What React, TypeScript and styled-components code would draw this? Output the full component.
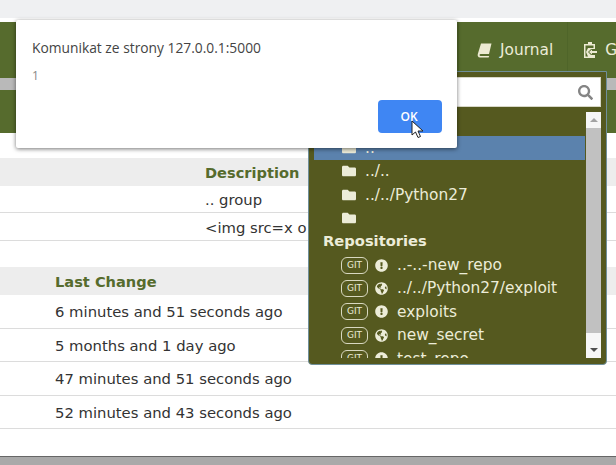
import styled, { createGlobalStyle } from 'styled-components';
import { FaExclamationCircle, FaFolder, FaGlobeAmericas, FaSearch } from 'react-icons/fa';

const GlobalStyle = createGlobalStyle`
  html, body {
    margin: 0;
    padding: 0;
    background: #fff;
    overflow: hidden;
  }
`;

const Page = styled.div`
  position: relative;
  display: flex;
  flex-direction: column;
  width: 616px;
  height: 465px;
  overflow: hidden;
  font-family: 'DejaVu Sans', Verdana, sans-serif;
  font-size: 14.8px;
  color: #333;
`;
const TopStrip = styled.div`
  height: 18px;
  margin-bottom: 4px;
  background: #eff0f2;
`;
const NavBar = styled.nav`
  display: flex;
  justify-content: flex-start;
  height: 56px;
  padding-left: 458px;
  box-sizing: border-box;
  background: #566b2d;
`;
const NavItem = styled.div<{ $left: number }>`
  display: flex;
  flex: none;
  align-items: center;
  gap: 8px;
  padding: 0 14px 0 ${({ $left }) => $left}px;
  border-left: 1px solid #4f6529;
  color: #ececd8;
  font-size: 15.4px;
`;
const GreyBand = styled.div`
  height: 12px;
  background: #b9b9b9;
`;
const SubBar = styled.div`
  height: 43px;
  background: #566b2d;
`;
const Main = styled.main`
  display: flex;
  flex: 1;
  flex-direction: column;
  padding-top: 25px;
`;
const Table = styled.div<{ $gap: number }>`
  margin-bottom: ${({ $gap }) => $gap}px;
`;
const HeadRow = styled.div<{ $indent: number }>`
  display: flex;
  align-items: center;
  box-sizing: border-box;
  height: 28px;
  padding: 1px 0 0 ${({ $indent }) => $indent}px;
  background: #ededed;
  color: #566b2d;
  font-size: 14.6px;
  font-weight: bold;
`;
const Row = styled.div<{ $indent: number; $height: number }>`
  display: flex;
  align-items: center;
  box-sizing: border-box;
  height: ${({ $height }) => $height}px;
  padding: 1px 0 0 ${({ $indent }) => $indent}px;
  border-bottom: 1px solid #dcdcdc;
  white-space: nowrap;
`;
const Footer = styled.footer`
  height: 9px;
  border-top: 1px solid #666;
  box-sizing: border-box;
  background: #a9a9a9;
`;

const Dropdown = styled.div`
  position: absolute;
  top: 71px;
  left: 308px;
  display: flex;
  flex-direction: column;
  gap: 5px;
  box-sizing: border-box;
  width: 299px;
  height: 294px;
  padding: 5px 5px 6px;
  border: 1px solid #6f8f9a;
  border-radius: 0 0 4px 4px;
  background: #55591f;
`;
const SearchBox = styled.div`
  display: flex;
  flex: none;
  align-items: center;
  justify-content: flex-end;
  height: 30px;
  padding-right: 7px;
  box-sizing: border-box;
  border: 1px solid #d8d8c8;
  background: #fff;
  color: #858585;
  font-size: 15px;
`;
const ListArea = styled.div`
  display: flex;
  flex: 1;
  min-height: 0;
  gap: 1px;
`;
const List = styled.div`
  flex: 1;
  padding-top: 1px;
  overflow: hidden;
  color: #ececd8;
  font-size: 15.4px;
`;
const GroupLabel = styled.div`
  display: flex;
  align-items: center;
  box-sizing: border-box;
  height: 23.4px;
  padding: 0 0 2px 9px;
  font-size: 14.7px;
  font-weight: bold;
`;
const Item = styled.div<{ $selected?: boolean }>`
  display: flex;
  align-items: center;
  gap: 9px;
  height: 23.4px;
  padding-left: 28px;
  white-space: nowrap;
  background: ${({ $selected }) => ($selected ? '#5b82ad' : 'transparent')};

  svg {
    flex: none;
    font-size: 14px;
  }
`;
const GitBadge = styled.span`
  flex: none;
  box-sizing: border-box;
  width: 27px;
  height: 17px;
  margin: 0 -2px 0 -1px;
  border: 1px solid #d8d8c0;
  border-radius: 6px;
  font-size: 9px;
  line-height: 15px;
  text-align: center;
`;
const RepoIcon = styled.span`
  display: flex;
  flex: none;

  && svg {
    font-size: 13px;
  }
`;
const ScrollTrack = styled.div`
  display: flex;
  flex: none;
  flex-direction: column;
  width: 15px;
  background: #f6f6f6;
`;
const ScrollArrow = styled.div<{ $up?: boolean }>`
  display: flex;
  flex: none;
  align-items: center;
  justify-content: center;
  height: 16px;

  &::after {
    content: '';
    border-left: 4px solid transparent;
    border-right: 4px solid transparent;
    ${({ $up }) => ($up ? 'border-bottom: 4px solid #a3a3a3;' : 'border-top: 4px solid #505050;')}
  }
`;
const ScrollThumb = styled.div`
  flex: none;
  height: 205px;
  background: #c1c1c1;
`;
const ScrollSpace = styled.div`
  flex: 1;
`;

const Dialog = styled.div`
  position: absolute;
  top: 20px;
  left: 16px;
  box-sizing: border-box;
  width: 441px;
  height: 128px;
  padding: 18px 16px;
  border-radius: 2px;
  background: #fff;
  box-shadow: 0 1px 4px rgba(0, 0, 0, 0.55);
  font-family: 'Open Sans', 'Noto Sans', sans-serif;
`;
const DialogTitle = styled.div`
  color: #444;
  font-size: 13.8px;
  line-height: 19px;
`;
const DialogText = styled.div`
  margin-top: 11px;
  color: #888;
  font-size: 12px;
  line-height: 16px;
`;
const OkButton = styled.button`
  position: absolute;
  right: 15px;
  bottom: 15px;
  width: 64px;
  height: 33px;
  padding: 0 2px 0 0;
  border: 0;
  border-radius: 4px;
  background: #3f86f3;
  color: #fff;
  font-family: 'Open Sans', sans-serif;
  font-size: 12px;
  font-weight: 600;
`;
const Cursor = styled.svg`
  position: absolute;
  top: 120px;
  left: 411px;
  width: 14px;
  height: 19px;
`;

const folders = ['..', '../..', '../../Python27', ''];
const repositories = [
  { name: '..-..-new_repo', isPublic: false },
  { name: '../../Python27/exploit', isPublic: true },
  { name: 'exploits', isPublic: false },
  { name: 'new_secret', isPublic: true },
  { name: 'test_repo', isPublic: false },
];
const changes = [
  '6 minutes and 51 seconds ago',
  '5 months and 1 day ago',
  '47 minutes and 51 seconds ago',
  '52 minutes and 43 seconds ago',
];

const BookIcon = () => (
  <svg width="15" height="16" viewBox="0 0 15 16">
    <path
      d="M4 1.5 H14.5 L12 12 H3.6 C2.2 12 2.2 14 3.6 14 H12.2 L11.6 15.5 H3 C1 15.5 .3 13.6 .8 12 Z"
      fill="#ecead2"
    />
  </svg>
);

const ClipboardIcon = () => (
  <svg width="14" height="16" viewBox="0 0 14 16">
    <path
      fillRule="evenodd"
      d="M5 0 H9 V2 H12 V7 H8 L5 10 L8 13 H12 V16 H1 V2 H5 Z M2.5 3.5 V14.5 H5 L3 10 L5 6 H10.5 V3.5 Z"
      fill="#ecead2"
    />
    <path d="M6 10 L9 7.5 V9 H14 V11 H9 V12.5 Z" fill="#ecead2" />
  </svg>
);

export default function App() {
  return (
    <Page>
      <GlobalStyle />
      <TopStrip />
      <NavBar>
        <NavItem $left={18}>
          <BookIcon />
          Journal
        </NavItem>
        <NavItem $left={15}>
          <ClipboardIcon />
          Gists
        </NavItem>
      </NavBar>
      <GreyBand />
      <SubBar />
      <Main>
        <Table $gap={26}>
          <HeadRow $indent={205}>Description</HeadRow>
          <Row $indent={205} $height={27}>
            .. group
          </Row>
          <Row $indent={205} $height={28}>
            {'<img src=x o'}
          </Row>
        </Table>
        <Table $gap={26}>
          <HeadRow $indent={55}>Last Change</HeadRow>
          {changes.map((change) => (
            <Row key={change} $indent={55} $height={33.5}>
              {change}
            </Row>
          ))}
        </Table>
      </Main>
      <Footer />
      <Dropdown>
        <SearchBox>
          <FaSearch />
        </SearchBox>
        <ListArea>
          <List>
            <GroupLabel>Groups</GroupLabel>
            {folders.map((folder, index) => (
              <Item key={index} $selected={index === 0}>
                <FaFolder />
                {folder}
              </Item>
            ))}
            <GroupLabel>Repositories</GroupLabel>
            {repositories.map((repo) => (
              <Item key={repo.name}>
                <GitBadge>GIT</GitBadge>
                <RepoIcon>{repo.isPublic ? <FaGlobeAmericas /> : <FaExclamationCircle />}</RepoIcon>
                {repo.name}
              </Item>
            ))}
          </List>
          <ScrollTrack>
            <ScrollArrow $up />
            <ScrollThumb />
            <ScrollSpace />
            <ScrollArrow />
          </ScrollTrack>
        </ListArea>
      </Dropdown>
      <Dialog>
        <DialogTitle>Komunikat ze strony 127.0.0.1:5000</DialogTitle>
        <DialogText>1</DialogText>
        <OkButton>OK</OkButton>
      </Dialog>
      <Cursor viewBox="0 0 14 19">
        <path d="M1 1 L1 15 L4.5 12 L7 17.5 L9.5 16.5 L7 11 L12 11 Z" fill="#fff" stroke="#222" strokeWidth="1" strokeLinejoin="round" />
      </Cursor>
    </Page>
  );
}
